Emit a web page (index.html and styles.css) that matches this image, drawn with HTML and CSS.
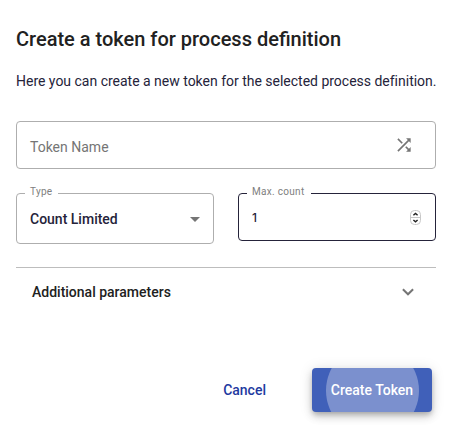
FILE: index.html
```html
<!DOCTYPE html>
<html lang="en">
  <head>
    <meta charset="UTF-8" />
    <meta name="viewport" content="width=device-width, initial-scale=1.0" />
    <title>Create token</title>
    <link rel="stylesheet" href="styles.css">
  </head>
  <body>
    <div class="dialog">
      <h1 class="title">Create a token for process definition</h1>
      <p class="description">Here you can create a new token for the selected process definition.</p>

      <div class="field name">
        <span class="placeholder">Token Name</span>
        <svg class="shuffle" width="20" height="20" viewBox="0 0 24 24">
          <path d="M10.59 9.17 5.41 4 4 5.41l5.17 5.17 1.42-1.41zM14.5 4l2.04 2.04L4 18.59 5.41 20 17.96 7.46 20 9.5V4h-5.5zm.33 9.41-1.41 1.41 3.13 3.13L14.5 20H20v-5.5l-2.04 2.04-3.13-3.13z" />
        </svg>
      </div>

      <div class="row">
        <div class="field type">
          <span class="label">Type</span>
          <span class="value">Count Limited</span>
          <span class="arrow"></span>
        </div>
        <div class="field count">
          <span class="label">Max. count</span>
          <span class="number">1</span>
          <svg class="stepper" width="11" height="15" viewBox="0 0 11 15">
            <rect x="0.5" y="0.5" width="10" height="14" rx="4" />
            <path class="line" d="M0.5 7.5h10" />
            <path class="tick" d="M3.4 5.3 5.5 3.4l2.1 1.9M3.4 9.9l2.1 1.9 2.1-1.9" />
          </svg>
        </div>
      </div>

      <div class="panel">
        <span class="panel-title">Additional parameters</span>
        <svg class="chevron" width="12" height="8" viewBox="0 0 12 8">
          <path d="M0.9 1.2 6 6.3l5.1-5.1" />
        </svg>
      </div>

      <div class="actions">
        <button class="cancel">Cancel</button>
        <button class="create">
          <span class="ripple"></span>
          <span class="create-text">Create Token</span>
        </button>
      </div>
    </div>
  </body>
</html>
```

FILE: styles.css
```css
/* Resets */
* {
  box-sizing: border-box;
}
body {
  margin: 0;
  background-color: #fff;
  font-family: Roboto, "Liberation Sans", sans-serif;
  font-size: 14px;
  color: #25233a;
}
h1,
p {
  margin: 0;
}

/* Dialog */
.dialog {
  width: 452px;
  min-height: 430px;
  padding: 23px 16px 0;
}
.title {
  font-size: 20px;
  font-weight: 500;
  line-height: 32px;
  color: #212121;
  white-space: nowrap;
}
.description {
  margin-top: 16px;
  line-height: 20px;
  letter-spacing: -0.01px;
  white-space: nowrap;
}

/* Fields */
.field {
  position: relative;
  display: flex;
  justify-content: space-between;
  align-items: center;
  height: 48px;
  padding: 0 13px;
  border: 1px solid #aeaeae;
  border-radius: 4px;
}
.name {
  margin-top: 30px;
  padding-right: 21px;
}
.placeholder {
  padding-top: 3px;
  color: #757575;
}
.shuffle {
  fill: #757575;
}
.row {
  display: grid;
  grid-template-columns: 198px 198px;
  align-items: start;
  gap: 24px;
  margin-top: 24px;
}
.label {
  position: absolute;
  top: -8px;
  left: 8px;
  padding: 0 6px 0 5px;
  background-color: #fff;
  font-size: 10px;
  line-height: 12px;
  letter-spacing: 0.3px;
  color: #808080;
}
.type {
  height: 51px;
}
.value {
  padding-top: 1px;
  font-weight: 500;
}
.arrow {
  margin-top: 2px;
  border: 5px solid transparent;
  border-top-color: #757575;
  border-bottom: 0;
}
.count {
  border-color: #25233a;
  padding-right: 14px;
}
.number {
  font-family: Inter, sans-serif;
  font-size: 12px;
  font-weight: 500;
}
.stepper {
  fill: #fff;
  stroke: #c8c8c8;
}
.tick {
  fill: none;
  stroke: #222;
  stroke-width: 1.4;
}

/* Additional parameters */
.panel {
  display: flex;
  justify-content: space-between;
  align-items: center;
  height: 49px;
  margin-top: 23px;
  padding: 0 22px 0 16px;
  border-top: 1px solid #bdbdbd;
}
.panel-title {
  font-weight: 500;
  color: #212121;
}
.chevron {
  fill: none;
  stroke: #757575;
  stroke-width: 2;
}

/* Buttons */
.actions {
  display: flex;
  justify-content: flex-end;
  gap: 30px;
  margin-top: 52px;
  padding-right: 4px;
}
button {
  height: 44px;
  padding: 0 16px;
  border: 0;
  border-radius: 4px;
  background: none;
  font: 500 14px Roboto, "Liberation Sans", sans-serif;
}
.cancel {
  color: #1e3a9f;
}
.create {
  position: relative;
  width: 120px;
  padding: 0;
  overflow: hidden;
  background-color: #4060b9;
  color: #fff;
  box-shadow: 0 3px 5px -1px rgba(0, 0, 0, 0.2), 0 5px 8px rgba(0, 0, 0, 0.14), 0 1px 14px rgba(0, 0, 0, 0.12);
}
.ripple {
  position: absolute;
  top: -24px;
  left: 14px;
  width: 93px;
  height: 93px;
  border-radius: 50%;
  background-color: #7b90ce;
}
.create-text {
  position: relative;
}
```
